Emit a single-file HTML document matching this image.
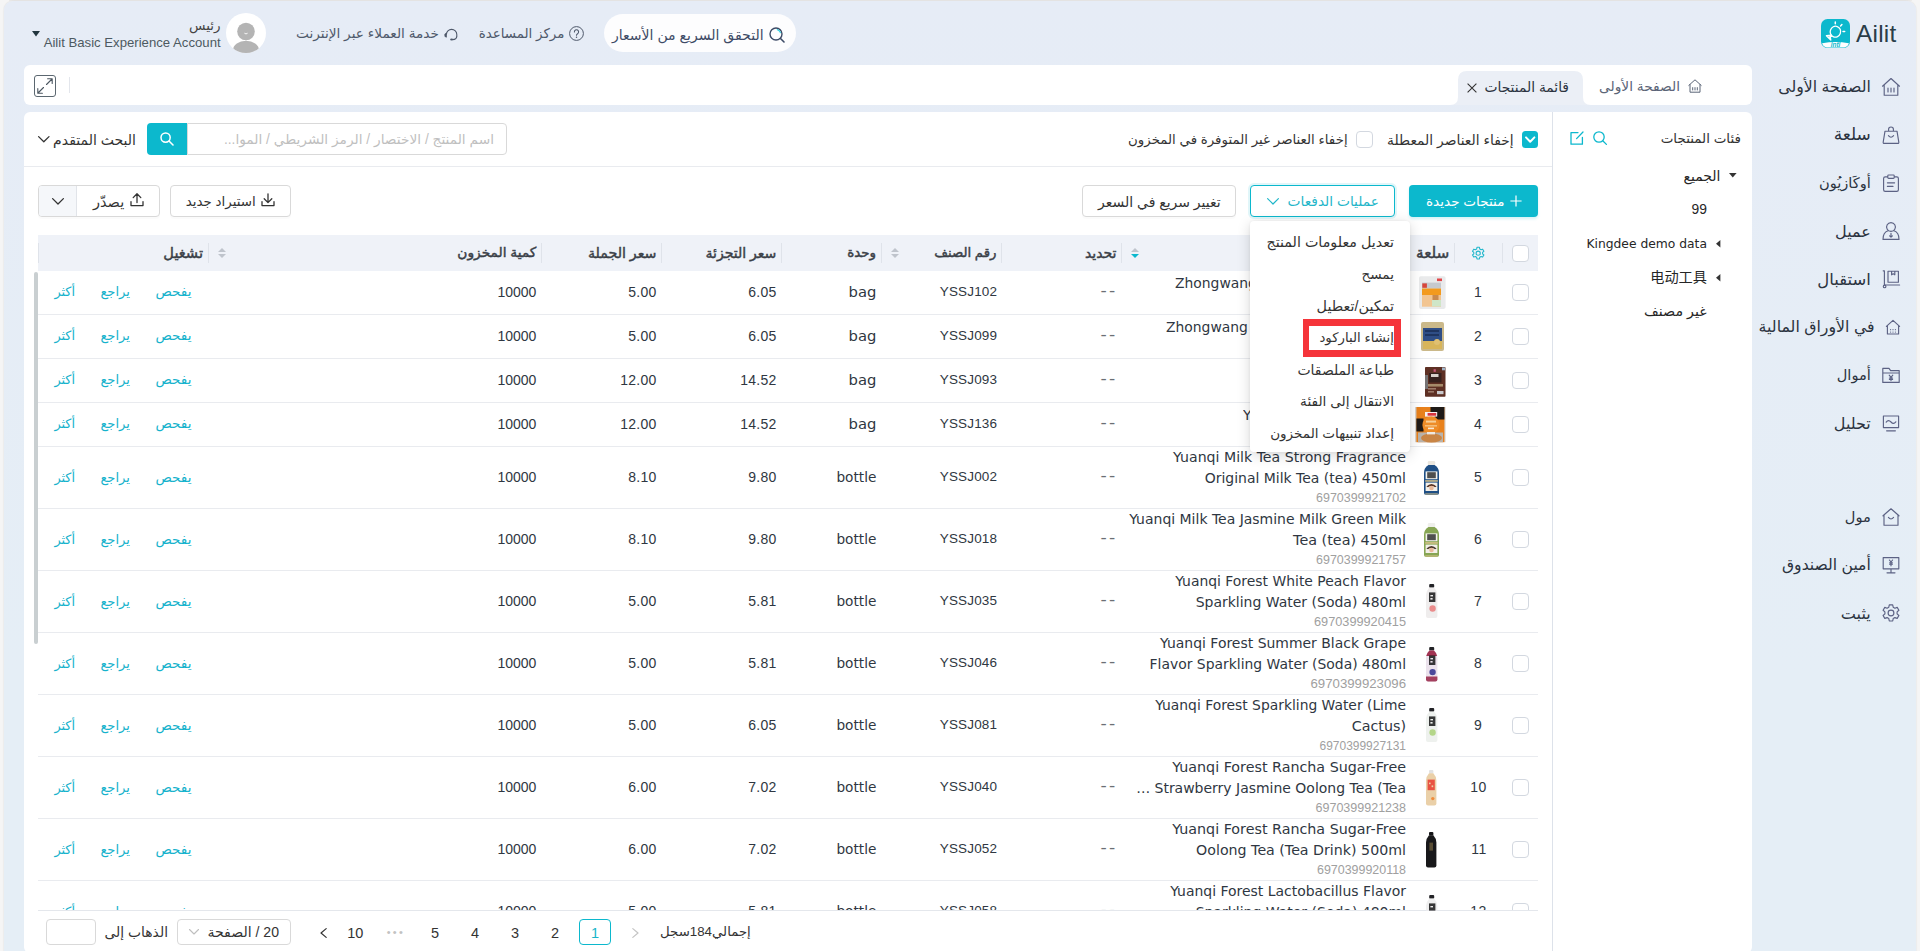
<!DOCTYPE html>
<html lang="ar" dir="rtl">
<head>
<meta charset="utf-8">
<title>قائمة المنتجات</title>
<style>
*{box-sizing:border-box;margin:0;padding:0}
html,body{width:1920px;height:951px;overflow:hidden;background:#f5f5f5}
body{position:relative;font-family:"Liberation Sans","DejaVu Sans","Noto Sans CJK SC",sans-serif;color:#333;font-size:14px}
.abs{position:absolute}
.t{position:absolute;white-space:nowrap;line-height:20px;height:20px}
svg{position:absolute;overflow:visible}
#app{position:absolute;left:4px;top:1px;width:1912.3px;height:960px;background:linear-gradient(#e6ecf6,#e5eef6 70%);border-radius:9px 9px 0 0;box-shadow:0 0 1.5px rgba(0,0,0,.16)}
.ico{stroke:#5c6284;fill:none;stroke-width:1.15;stroke-linejoin:round;stroke-linecap:round}
.tl{stroke:#0cb8cd;fill:none;stroke-width:1.3;stroke-linejoin:round;stroke-linecap:round}
.dk{stroke:#333;fill:none;stroke-width:1.3;stroke-linejoin:round;stroke-linecap:round}
.cb{position:absolute;width:17px;height:17px;border:1px solid #d3d8e0;border-radius:4px;background:#fff}
.hsep{position:absolute;width:1px;height:20px;top:243px;background:#dfe3ea}
.rb{position:absolute;left:38px;width:1500px;height:1px;background:#e9ebef}
.btn{position:absolute;top:185px;height:32px;border:1px solid #d9d9d9;border-radius:4px;background:#fff;box-shadow:0 2px 0 rgba(0,0,0,.015)}
.nm{position:absolute;right:514px;width:300px;text-align:right;font-family:'DejaVu Sans','Liberation Sans',sans-serif;font-size:13.9px;line-height:21px;color:#2f3742;white-space:nowrap}
.bc{position:absolute;right:514px;font-family:'Liberation Sans',sans-serif;font-size:12.6px;line-height:16px;color:#a0a0a0;white-space:nowrap}
</style>
</head>
<body>
<div class="abs" style="left:9px;top:0;width:1903px;height:1px;background:#ecebea"></div>
<div id="app"></div>
<svg style="left:1821px;top:19px;" width="29" height="29" viewBox="0 0 29 29">
<rect x="0" y="0" width="29" height="29" rx="6.5" fill="#0cb8cd"/>
<path d="M1.2 24.2 Q14.5 21.6 27.8 24.2 L27.8 24.6 Q26.6 28.4 23 28.4 L6 28.4 Q2.4 28.4 1.2 24.6Z" fill="#fff"/>
<ellipse cx="14.4" cy="12.7" rx="5.2" ry="5.5" transform="rotate(20 14.4 12.7)" fill="none" stroke="#fff" stroke-width="1.3"/>
<path d="M10.4 16.2 L5.4 16.7 L9.8 21 L9.2 17.6 M7.4 18.2 L10.6 17.4" stroke="#fff" stroke-width="1.3" fill="none" stroke-linecap="round" stroke-linejoin="round"/>
<path d="M14.3 4.7V3.1 M19.6 6.9l1.3-1.4 M22 12.6h1.7" stroke="#fff" stroke-width="1.5" fill="none" stroke-linecap="round"/>
<text x="14.6" y="28.2" font-size="6.4" font-weight="bold" font-style="italic" fill="#0cb8cd" text-anchor="middle" font-family="Liberation Sans,sans-serif" direction="ltr">intl</text>
</svg>
<div class="t" dir="ltr" style="right:23.5px;top:18.5px;font-size:24.30px;color:#2a3d48;font-family:'Liberation Sans','DejaVu Sans',sans-serif;letter-spacing:.25px;line-height:30px;height:30px;">Ailit</div>
<div class="abs" style="left:604px;top:14px;width:192px;height:38px;background:#fdfdfe;border-radius:19px"></div>
<svg style="left:769px;top:27px;" width="16" height="16" viewBox="0 0 16 16"><circle cx="7" cy="7" r="6" fill="none" stroke="#3d4b66" stroke-width="1.4"/><path d="M11.5 11.5L15 15" stroke="#3d4b66" stroke-width="1.6" stroke-linecap="round"/><path d="M8.3 2.6A4.6 4.6 0 0 1 11.4 5.7" stroke="#39d0e0" stroke-width="1.2" fill="none" stroke-linecap="round"/></svg>
<div class="t" style="right:1156.4px;top:24.5px;font-size:14.05px;color:#3d4b66;">التحقق السريع من الأسعار</div>
<svg style="left:569px;top:26px;" width="15" height="15" viewBox="0 0 15 15"><circle cx="7.5" cy="7.5" r="6.9" fill="none" stroke="#4f596b" stroke-width="1"/><path d="M5.4 5.9a2.1 2.1 0 1 1 3.2 1.8c-.7.45-1.1.8-1.1 1.6" fill="none" stroke="#4f596b" stroke-width="1.1" stroke-linecap="round"/><circle cx="7.5" cy="11.2" r=".75" fill="#4f596b"/></svg>
<div class="t" style="right:1355.6px;top:23.5px;font-size:13.41px;color:#4f596b;">مركز المساعدة</div>
<svg style="left:443.5px;top:26.5px;" width="15" height="14" viewBox="0 0 15 14"><path d="M2.4 7.6A5.2 5.2 0 0 1 12.8 7.6V9.2" fill="none" stroke="#4f596b" stroke-width="1.1"/><path d="M2.4 6.2V10.2L.9 9.4V7Z" fill="#4f596b" stroke="#4f596b" stroke-width=".8" stroke-linejoin="round"/><path d="M12.8 9C12.8 11.6 10.6 12.6 8.6 12.6" fill="none" stroke="#4f596b" stroke-width="1.1"/><ellipse cx="7.6" cy="12.6" rx="1.5" ry="1" fill="#4f596b"/></svg>
<div class="t" style="right:1481.0px;top:23.5px;font-size:13.69px;color:#4f596b;">خدمة العملاء عبر الإنترنت</div>
<div class="abs" style="left:226px;top:13px;width:40px;height:40px;background:#fff;border-radius:50%;overflow:hidden"><svg style="left:0;top:0" width="40" height="40" viewBox="0 0 40 40"><circle cx="20" cy="18.5" r="8.8" fill="#b4b4b4"/><ellipse cx="20" cy="37" rx="13" ry="9.3" fill="#b4b4b4"/><path d="M18.4 20.2q1.6 1.5 3.2 0" stroke="#fff" stroke-width=".9" fill="none"/></svg></div>
<div class="t" style="right:1699.4px;top:15.5px;font-size:13.52px;color:#444;">رئيس</div>
<div class="t" dir="ltr" style="right:1699.4px;top:32.5px;font-size:13.17px;color:#4d5a61;font-family:'Liberation Sans','DejaVu Sans',sans-serif;">Ailit Basic Experience Account</div>
<svg style="left:32px;top:30.5px;" width="8" height="6" viewBox="0 0 8 6"><path d="M0 0H8L4 5.6Z" fill="#22363f"/></svg>
<svg style="left:1880.7px;top:77.0px;" width="20" height="20" viewBox="0 0 20 20"><path class="ico" d="M1.5 9.2L10 1.5L18.5 9.2M3.2 7.8V18.2H16.8V7.8M7 11v4M10 11v4M13 11v4"/></svg>
<div class="t" style="right:49.2px;top:74.5px;font-size:15.72px;color:#2b3340;line-height:24px;height:24px;">الصفحة الأولى</div>
<svg style="left:1880.7px;top:125.0px;" width="20" height="20" viewBox="0 0 20 20"><path class="ico" d="M4 6.2H16L17.8 17.2Q18 18.4 16.8 18.4H3.2Q2 18.4 2.2 17.2ZM7.6 6V4.2Q7.6 2 10 2Q12.4 2 12.4 4.2V6M7.4 10.6Q10 13.8 12.6 10.6"/></svg>
<div class="t" style="right:49.2px;top:122.5px;font-size:17.00px;color:#2b3340;line-height:24px;height:24px;">سلعة</div>
<svg style="left:1880.7px;top:173.0px;" width="20" height="20" viewBox="0 0 20 20"><path class="ico" d="M6.8 3.8H4.2Q2.6 3.8 2.6 5.4V16.8Q2.6 18.4 4.2 18.4H15.8Q17.4 18.4 17.4 16.8V5.4Q17.4 3.8 15.8 3.8H13.2M7.6 2H12.4Q13.2 2 13.2 2.8V4.6Q13.2 5.4 12.4 5.4H7.6Q6.8 5.4 6.8 4.6V2.8Q6.8 2 7.6 2ZM6.4 9.8H13.6M6.4 13.4H12"/></svg>
<div class="t" style="right:49.2px;top:170.5px;font-size:14.60px;color:#2b3340;line-height:24px;height:24px;">أوكَازيُون</div>
<svg style="left:1880.7px;top:221.0px;" width="20" height="20" viewBox="0 0 20 20"><path class="ico" d="M10 1.6A4.4 4.4 0 1 1 9.99 1.6ZM2 18.4Q2 11.4 7 9.8M18 18.4Q18 11.4 13 9.8M2 18.4H18M10 12.4V16M8.6 14.8L10 16.2L11.4 14.8"/></svg>
<div class="t" style="right:49.2px;top:218.5px;font-size:16.03px;color:#2b3340;line-height:24px;height:24px;">عميل</div>
<svg style="left:1880.7px;top:269.0px;" width="20" height="20" viewBox="0 0 20 20"><path class="ico" d="M2.2 1.8H3.4V16H18.6M7 2.2H17.4V13.2H7ZM10.6 2.2V5.8L12.2 4.8L13.8 5.8V2.2"/><circle class="ico" cx="3.6" cy="17.4" r="1.3"/></svg>
<div class="t" style="right:49.2px;top:266.5px;font-size:16.43px;color:#2b3340;line-height:24px;height:24px;">استقبال</div>
<svg style="left:1883px;top:317.0px;" width="20" height="20" viewBox="0 0 20 20"><path class="ico" d="M3.4 9.4L10 3.4L16.6 9.4M4.4 8.6V17H15.6V8.6M7.6 12.6v.1M10 12.6v.1M12.4 12.6v.1M7.6 15v.1M10 15v.1M12.4 15v.1"/></svg>
<div class="t" style="right:45.4px;top:314.5px;font-size:15.80px;color:#2b3340;line-height:24px;height:24px;">في الأوراق المالية</div>
<svg style="left:1880.7px;top:365.0px;" width="20" height="20" viewBox="0 0 20 20"><path class="ico" d="M1.8 3.4H8L9.6 5.6H18.2V17.4H1.8ZM1.8 8H18.2M8.2 10.2L10 12.4L11.8 10.2M10 12.4V15.6M8.4 13H11.6M8.4 14.4H11.6"/></svg>
<div class="t" style="right:49.2px;top:362.5px;font-size:14.60px;color:#2b3340;line-height:24px;height:24px;">أموال</div>
<svg style="left:1880.7px;top:413.0px;" width="20" height="20" viewBox="0 0 20 20"><path class="ico" d="M2.4 3H17.6V14.6H2.4ZM5.6 17.8H14.4M5.2 9.2Q7.4 6.2 10 9Q12.6 11.8 14.8 8.8"/></svg>
<div class="t" style="right:49.2px;top:410.5px;font-size:16.03px;color:#2b3340;line-height:24px;height:24px;">تحليل</div>
<svg style="left:1880.7px;top:507.0px;" width="20" height="20" viewBox="0 0 20 20"><path class="ico" d="M2 8.8L10 1.8L18 8.8M3 8V18.2H17V8M7.4 10.4Q10 13.6 12.6 10.4"/></svg>
<div class="t" style="right:49.2px;top:504.5px;font-size:14.60px;color:#2b3340;line-height:24px;height:24px;">مول</div>
<svg style="left:1880.7px;top:555.0px;" width="20" height="20" viewBox="0 0 20 20"><path class="ico" d="M2.2 2.6H17.8V13.8H2.2ZM10 13.8V17.6M6 17.8H14M8.4 5L10 7L11.6 5M10 7V10.8M8.6 7.8H11.4M8.6 9.2H11.4"/></svg>
<div class="t" style="right:49.2px;top:552.5px;font-size:15.61px;color:#2b3340;line-height:24px;height:24px;">أمين الصندوق</div>
<svg style="left:1880.7px;top:603.0px;" width="20" height="20" viewBox="0 0 20 20"><path class="ico" d="M8.3 1.8h3.4l.5 2.4 1.7 1 2.3-.8 1.7 2.9-1.8 1.6v2l1.8 1.6-1.7 2.9-2.3-.8-1.7 1-.5 2.4H8.3l-.5-2.4-1.7-1-2.3.8-1.7-2.9 1.8-1.6v-2L2.1 7.3l1.7-2.9 2.3.8 1.7-1Z"/><circle class="ico" cx="10" cy="10" r="2.9"/></svg>
<div class="t" style="right:49.2px;top:600.5px;font-size:16.10px;color:#2b3340;line-height:24px;height:24px;">يثبت</div>
<div class="abs" style="left:24px;top:65px;width:1728px;height:40px;background:#fff;border-radius:6px"></div>
<svg style="left:1687.5px;top:79px;" width="14" height="14" viewBox="0 0 14 14"><path d="M.8 6.4L7 .8L13.2 6.4M2 5.6V13.2H12V5.6M4.7 8.6v2.4M7 8.6v2.4M9.3 8.6v2.4" fill="none" stroke="#5b6577" stroke-width="1" stroke-linejoin="round" stroke-linecap="round"/></svg>
<div class="t" style="right:240.0px;top:76.5px;font-size:13.77px;color:#5b6577;">الصفحة الأولى</div>
<svg style="left:1450px;top:71px;" width="141" height="34" viewBox="0 0 141 34"><path d="M0 34 Q8 34 8 26 V9 Q8 0 17 0 H124 Q133 0 133 9 V26 Q133 34 141 34 Z" fill="#ebeff6"/></svg>
<div class="t" style="right:351.0px;top:76.5px;font-size:13.85px;color:#2b3340;">قائمة المنتجات</div>
<svg style="left:1466.5px;top:82.5px;" width="10" height="10" viewBox="0 0 10 10"><path d="M.6 .6L9.4 9.4M9.4 .6L.6 9.4" stroke="#333" stroke-width="1.1" fill="none"/></svg>
<div class="abs" style="left:34px;top:74.5px;width:22px;height:22px;border:1px solid #5b6770;border-radius:3px"></div>
<svg style="left:34px;top:74.5px;" width="22" height="22" viewBox="0 0 22 22"><path d="M12.5 9.5L18 4M13.6 3.8H18.2V8.4M9.5 12.5L4 18M3.8 13.6V18.2H8.4" fill="none" stroke="#4b5660" stroke-width="1.1" stroke-linecap="round" stroke-linejoin="round"/></svg>
<div class="abs" style="left:69px;top:77px;width:1px;height:16px;background:#e3e6ec"></div>
<div class="abs" style="left:24px;top:112px;width:1728px;height:840.5px;background:#fff;border-radius:6px"></div>
<div class="abs" style="left:1552px;top:112px;width:1px;height:845px;background:#dde2ea"></div>
<div class="t" style="right:179.0px;top:128.7px;font-size:13.49px;color:#333;">فئات المنتجات</div>
<svg style="left:1593px;top:131px;" width="14" height="14" viewBox="0 0 14 14"><circle class="tl" cx="6" cy="6" r="5.2"/><path class="tl" d="M10 10L13.4 13.4"/></svg>
<svg style="left:1569.5px;top:130.5px;" width="14" height="14" viewBox="0 0 14 14"><path class="tl" d="M8 1.6H1V13.2H12.4V6.4M6.6 7.6L13 1"/></svg>
<svg style="left:1728.5px;top:173px;" width="8" height="5" viewBox="0 0 8 5"><path d="M0 0H7.6L3.8 4.4Z" fill="#333"/></svg>
<div class="t" style="right:199.6px;top:165.5px;font-size:13.94px;color:#262626;">الجميع</div>
<div class="t" dir="ltr" style="right:213.0px;top:198.8px;font-size:13.84px;color:#262626;font-family:'Liberation Sans','DejaVu Sans',sans-serif;">99</div>
<svg style="left:1715.5px;top:239.5px;" width="5" height="8" viewBox="0 0 5 8"><path d="M4.4 0V7.6L0 3.8Z" fill="#333"/></svg>
<div class="t" dir="ltr" style="right:213.0px;top:233.8px;font-size:12.32px;color:#262626;font-family:'DejaVu Sans','Liberation Sans',sans-serif;">Kingdee demo data</div>
<svg style="left:1715.5px;top:273.5px;" width="5" height="8" viewBox="0 0 5 8"><path d="M4.4 0V7.6L0 3.8Z" fill="#333"/></svg>
<div class="t" style="right:213.0px;top:267.0px;font-size:14.20px;color:#262626;">电动工具</div>
<div class="t" style="right:213.3px;top:301.0px;font-size:14.29px;color:#262626;">غير مصنف</div>
<div class="abs" style="left:1521.5px;top:131px;width:16.5px;height:16.5px;background:#0cb8cd;border-radius:3.5px"></div>
<svg style="left:1521.5px;top:131px;" width="16.5" height="16.5" viewBox="0 0 16.5 16.5"><path d="M4 6.4L8.2 10.8L12.4 6.4" fill="none" stroke="#fff" stroke-width="2" stroke-linecap="round" stroke-linejoin="round"/></svg>
<div class="t" style="right:406.4px;top:129.5px;font-size:13.86px;color:#333;">إخفاء العناصر المعطلة</div>
<div class="cb" style="left:1355.5px;top:130.5px"></div>
<div class="t" style="right:572.4px;top:129.5px;font-size:13.36px;color:#333;">إخفاء العناصر غير المتوفرة في المخزون</div>
<div class="abs" style="left:187px;top:123px;width:319.5px;height:32px;border:1px solid #d9d9d9;border-radius:0 4px 4px 0;background:#fff"></div>
<div class="t" style="right:1426.0px;top:129.5px;font-size:13.75px;color:#bfbfbf;">اسم المنتج / الاختصار / الرمز الشريطي / الموا...</div>
<div class="abs" style="left:147px;top:123px;width:40px;height:32px;background:#0cb8cd;border-radius:4px 0 0 4px"></div>
<svg style="left:160px;top:131.5px;" width="14" height="14" viewBox="0 0 14 14"><circle cx="5.6" cy="5.6" r="4.6" fill="none" stroke="#fff" stroke-width="1.5"/><path d="M9 9L13 13" stroke="#fff" stroke-width="1.6" stroke-linecap="round"/></svg>
<div class="t" style="right:1784.0px;top:129.5px;font-size:14.06px;color:#333;">البحث المتقدم</div>
<svg style="left:38px;top:136px;" width="12" height="7" viewBox="0 0 12 7"><path d="M.6 .6L5.8 5.8L11 .6" fill="none" stroke="#333" stroke-width="1.3" stroke-linecap="round" stroke-linejoin="round"/></svg>
<div class="abs" style="left:24px;top:166px;width:1528px;height:1px;background:#e9ebef"></div>
<div class="abs" style="left:1409px;top:185px;width:129px;height:32px;background:#0cb8cd;border-radius:4px;box-shadow:0 2px 3px rgba(12,184,205,.18)"></div>
<svg style="left:1510px;top:195px;" width="12" height="12" viewBox="0 0 12 12"><path d="M6 .4V11.6M.4 6H11.6" stroke="#fff" stroke-width="1.2" fill="none"/></svg>
<div class="t" style="right:415.6px;top:191.5px;font-size:13.57px;color:#fff;">منتجات جديدة</div>
<div class="abs" style="left:1250px;top:185px;width:145px;height:32px;border:1px solid #0cb8cd;border-radius:4px;background:#fff;box-shadow:0 0 0 2px rgba(12,184,205,.12)"></div>
<div class="t" style="right:541.0px;top:191.5px;font-size:13.78px;color:#1fb6c9;">عمليات الدفعات</div>
<svg style="left:1267px;top:197.5px;" width="12" height="7" viewBox="0 0 12 7"><path d="M.6 .6L6 6L11.4 .6" fill="none" stroke="#1fb6c9" stroke-width="1.2" stroke-linecap="round" stroke-linejoin="round"/></svg>
<div class="btn" style="left:1082px;width:154px"></div>
<div class="t" style="right:699.4px;top:191.5px;font-size:13.98px;color:#333;">تغيير سريع في السعر</div>
<div class="btn" style="left:170px;width:121px"></div>
<svg style="left:261px;top:193px;" width="14" height="14" viewBox="0 0 14 14"><path class="dk" d="M7 .8V9.4M3.2 5.8L7 9.6L10.8 5.8M1 8.6V12.6H13V8.6"/></svg>
<div class="t" style="right:1664.2px;top:191.5px;font-size:13.43px;color:#333;">استيراد جديد</div>
<div class="btn" style="left:38px;width:122px"></div>
<div class="abs" style="left:39px;top:186px;width:38px;height:30px;background:#f5f7fa;border-right:1px solid #e1e4e9;border-radius:3px 0 0 3px"></div>
<svg style="left:51.8px;top:197.5px;" width="12" height="7" viewBox="0 0 12 7"><path d="M.6 .6L6 6L11.4 .6" fill="none" stroke="#333" stroke-width="1.3" stroke-linecap="round" stroke-linejoin="round"/></svg>
<svg style="left:129.5px;top:193px;" width="14" height="14" viewBox="0 0 14 14"><path class="dk" d="M7 9.6V1M3.2 4.6L7 .8L10.8 4.6M1 8.6V12.6H13V8.6"/></svg>
<div class="t" style="right:1795.8px;top:191.5px;font-size:14.49px;color:#333;">يصدّر</div>
<div class="abs" style="left:38px;top:235px;width:1500px;height:36px;background:#eff2f8"></div>
<div class="hsep" style="left:38px"></div>
<div class="hsep" style="left:208px"></div>
<div class="hsep" style="left:541px"></div>
<div class="hsep" style="left:661px"></div>
<div class="hsep" style="left:781px"></div>
<div class="hsep" style="left:881px"></div>
<div class="hsep" style="left:1001px"></div>
<div class="hsep" style="left:1121px"></div>
<div class="hsep" style="left:1409px"></div>
<div class="hsep" style="left:1454px"></div>
<div class="hsep" style="left:1502px"></div>
<svg style="left:218px;top:248px;" width="8" height="10" viewBox="0 0 8 10"><path d="M0 4L4 0L8 4Z" fill="#bfc4cc"/><path d="M0 6L4 10L8 6Z" fill="#bfc4cc"/></svg>
<svg style="left:891px;top:248px;" width="8" height="10" viewBox="0 0 8 10"><path d="M0 4L4 0L8 4Z" fill="#bfc4cc"/><path d="M0 6L4 10L8 6Z" fill="#bfc4cc"/></svg>
<svg style="left:1131px;top:248px;" width="8" height="10" viewBox="0 0 8 10"><path d="M0 4L4 0L8 4Z" fill="#bfc4cc"/><path d="M0 6L4 10L8 6Z" fill="#0cb8cd"/></svg>
<div class="t" style="right:1717.0px;top:243.2px;font-size:14.64px;color:#3a3f47;-webkit-text-stroke:.45px #3a3f47;">تشغيل</div>
<div class="t" style="right:1383.6px;top:243.2px;font-size:13.77px;color:#3a3f47;-webkit-text-stroke:.45px #3a3f47;">كمية المخزون</div>
<div class="t" style="right:1263.6px;top:243.2px;font-size:14.20px;color:#3a3f47;-webkit-text-stroke:.45px #3a3f47;">سعر الجملة</div>
<div class="t" style="right:1143.6px;top:243.2px;font-size:14.07px;color:#3a3f47;-webkit-text-stroke:.45px #3a3f47;">سعر التجزئة</div>
<div class="t" style="right:1044.0px;top:243.2px;font-size:13.40px;color:#3a3f47;-webkit-text-stroke:.45px #3a3f47;">وحدة</div>
<div class="t" style="right:923.6px;top:243.2px;font-size:13.26px;color:#3a3f47;-webkit-text-stroke:.45px #3a3f47;">رقم الصنف</div>
<div class="t" style="right:803.6px;top:243.2px;font-size:13.99px;color:#3a3f47;-webkit-text-stroke:.45px #3a3f47;">تحديد</div>
<div class="t" style="right:516.0px;top:242.5px;font-size:13.00px;color:#3a3f47;-webkit-text-stroke:.45px #3a3f47;">اسم المنتج</div>
<div class="t" style="right:470.6px;top:243.2px;font-size:15.27px;color:#3a3f47;-webkit-text-stroke:.45px #3a3f47;">سلعة</div>
<svg style="left:1471px;top:246px;" width="14.4" height="14.4" viewBox="0 0 20 20"><path d="M8.3 1.8h3.4l.5 2.4 1.7 1 2.3-.8 1.7 2.9-1.8 1.6v2l1.8 1.6-1.7 2.9-2.3-.8-1.7 1-.5 2.4H8.3l-.5-2.4-1.7-1-2.3.8-1.7-2.9 1.8-1.6v-2L2.1 7.3l1.7-2.9 2.3.8 1.7-1Z" fill="none" stroke="#22b8cc" stroke-width="1.5" stroke-linejoin="round"/><circle cx="10" cy="10" r="2.9" fill="none" stroke="#22b8cc" stroke-width="1.5"/></svg>
<div class="cb" style="left:1511.5px;top:244.5px"></div>
<div class="abs" style="left:30px;top:271px;width:1512px;height:639.5px;overflow:hidden">
<div class="abs" style="left:-30px;top:-271px;width:1920px;height:951px">
<div class="cb" style="left:1511.5px;top:284.0px"></div>
<div class="t" dir="ltr" style="right:438.0px;top:281.8px;font-size:14.00px;color:#2f3742;font-family:'Liberation Sans','DejaVu Sans',sans-serif;letter-spacing:.3px;">1</div>
<div class="nm" dir="ltr" style="right:auto;left:1175px;width:231px;overflow:hidden;text-align:left;top:272.8px;font-size:13.90px">Zhongwang Hand-Pulled Noodle 1kg</div>
<div class="bc" dir="ltr" style="top:294.5px;line-height:18px">6970399925311</div>
<div class="t" dir="ltr" style="right:804.0px;top:281.0px;font-size:16.00px;color:#6b6f75;font-family:'Liberation Sans','DejaVu Sans',sans-serif;letter-spacing:2px;margin-right:-2px;transform:scaleX(1.17);transform-origin:right center;">--</div>
<div class="t" dir="ltr" style="right:923.0px;top:281.8px;font-size:13.50px;color:#2f3742;font-family:'Liberation Sans','DejaVu Sans',sans-serif;letter-spacing:.15px;margin-right:-.15px;">YSSJ102</div>
<div class="t" dir="ltr" style="right:1043.6px;top:281.8px;font-size:14.77px;color:#2f3742;font-family:'DejaVu Sans','Liberation Sans',sans-serif;">bag</div>
<div class="t" dir="ltr" style="right:1143.6px;top:281.8px;font-size:14.00px;color:#2f3742;font-family:'Liberation Sans','DejaVu Sans',sans-serif;letter-spacing:.3px;margin-right:-.3px;">6.05</div>
<div class="t" dir="ltr" style="right:1263.6px;top:281.8px;font-size:14.00px;color:#2f3742;font-family:'Liberation Sans','DejaVu Sans',sans-serif;letter-spacing:.3px;margin-right:-.3px;">5.00</div>
<div class="t" dir="ltr" style="right:1383.6px;top:281.8px;font-size:14.00px;color:#2f3742;font-family:'Liberation Sans','DejaVu Sans',sans-serif;">10000</div>
<div class="t" style="right:1728.6px;top:282.3px;font-size:13.56px;color:#15b2cc;">يفحص</div>
<div class="t" style="right:1790.0px;top:282.3px;font-size:13.11px;color:#15b2cc;">يراجع</div>
<div class="t" style="right:1845.0px;top:282.3px;font-size:12.81px;color:#15b2cc;">أكثر</div>
<div class="rb" style="top:314px"></div>
<div class="cb" style="left:1511.5px;top:328.0px"></div>
<div class="t" dir="ltr" style="right:438.0px;top:325.8px;font-size:14.00px;color:#2f3742;font-family:'Liberation Sans','DejaVu Sans',sans-serif;letter-spacing:.3px;">2</div>
<div class="nm" dir="ltr" style="right:auto;left:1166px;width:240px;overflow:hidden;text-align:left;top:316.8px;font-size:13.90px">Zhongwang Blue Pack Beef Noodle 1kg</div>
<div class="bc" dir="ltr" style="top:338.5px;line-height:18px">6970399925328</div>
<div class="t" dir="ltr" style="right:804.0px;top:325.0px;font-size:16.00px;color:#6b6f75;font-family:'Liberation Sans','DejaVu Sans',sans-serif;letter-spacing:2px;margin-right:-2px;transform:scaleX(1.17);transform-origin:right center;">--</div>
<div class="t" dir="ltr" style="right:923.0px;top:325.8px;font-size:13.50px;color:#2f3742;font-family:'Liberation Sans','DejaVu Sans',sans-serif;letter-spacing:.15px;margin-right:-.15px;">YSSJ099</div>
<div class="t" dir="ltr" style="right:1043.6px;top:325.8px;font-size:14.77px;color:#2f3742;font-family:'DejaVu Sans','Liberation Sans',sans-serif;">bag</div>
<div class="t" dir="ltr" style="right:1143.6px;top:325.8px;font-size:14.00px;color:#2f3742;font-family:'Liberation Sans','DejaVu Sans',sans-serif;letter-spacing:.3px;margin-right:-.3px;">6.05</div>
<div class="t" dir="ltr" style="right:1263.6px;top:325.8px;font-size:14.00px;color:#2f3742;font-family:'Liberation Sans','DejaVu Sans',sans-serif;letter-spacing:.3px;margin-right:-.3px;">5.00</div>
<div class="t" dir="ltr" style="right:1383.6px;top:325.8px;font-size:14.00px;color:#2f3742;font-family:'Liberation Sans','DejaVu Sans',sans-serif;">10000</div>
<div class="t" style="right:1728.6px;top:326.3px;font-size:13.56px;color:#15b2cc;">يفحص</div>
<div class="t" style="right:1790.0px;top:326.3px;font-size:13.11px;color:#15b2cc;">يراجع</div>
<div class="t" style="right:1845.0px;top:326.3px;font-size:12.81px;color:#15b2cc;">أكثر</div>
<div class="rb" style="top:358px"></div>
<div class="cb" style="left:1511.5px;top:372.0px"></div>
<div class="t" dir="ltr" style="right:438.0px;top:369.8px;font-size:14.00px;color:#2f3742;font-family:'Liberation Sans','DejaVu Sans',sans-serif;letter-spacing:.3px;">3</div>
<div class="nm" dir="ltr" style="right:auto;left:1256px;width:150px;overflow:hidden;text-align:left;top:360.8px;font-size:13.90px">Haochi Spicy Beef 60g</div>
<div class="bc" dir="ltr" style="top:382.5px;line-height:18px">6970399925335</div>
<div class="t" dir="ltr" style="right:804.0px;top:369.0px;font-size:16.00px;color:#6b6f75;font-family:'Liberation Sans','DejaVu Sans',sans-serif;letter-spacing:2px;margin-right:-2px;transform:scaleX(1.17);transform-origin:right center;">--</div>
<div class="t" dir="ltr" style="right:923.0px;top:369.8px;font-size:13.50px;color:#2f3742;font-family:'Liberation Sans','DejaVu Sans',sans-serif;letter-spacing:.15px;margin-right:-.15px;">YSSJ093</div>
<div class="t" dir="ltr" style="right:1043.6px;top:369.8px;font-size:14.77px;color:#2f3742;font-family:'DejaVu Sans','Liberation Sans',sans-serif;">bag</div>
<div class="t" dir="ltr" style="right:1143.6px;top:369.8px;font-size:14.00px;color:#2f3742;font-family:'Liberation Sans','DejaVu Sans',sans-serif;letter-spacing:.3px;margin-right:-.3px;">14.52</div>
<div class="t" dir="ltr" style="right:1263.6px;top:369.8px;font-size:14.00px;color:#2f3742;font-family:'Liberation Sans','DejaVu Sans',sans-serif;letter-spacing:.3px;margin-right:-.3px;">12.00</div>
<div class="t" dir="ltr" style="right:1383.6px;top:369.8px;font-size:14.00px;color:#2f3742;font-family:'Liberation Sans','DejaVu Sans',sans-serif;">10000</div>
<div class="t" style="right:1728.6px;top:370.3px;font-size:13.56px;color:#15b2cc;">يفحص</div>
<div class="t" style="right:1790.0px;top:370.3px;font-size:13.11px;color:#15b2cc;">يراجع</div>
<div class="t" style="right:1845.0px;top:370.3px;font-size:12.81px;color:#15b2cc;">أكثر</div>
<div class="rb" style="top:402px"></div>
<div class="cb" style="left:1511.5px;top:416.0px"></div>
<div class="t" dir="ltr" style="right:438.0px;top:413.8px;font-size:14.00px;color:#2f3742;font-family:'Liberation Sans','DejaVu Sans',sans-serif;letter-spacing:.3px;">4</div>
<div class="nm" dir="ltr" style="right:auto;left:1243px;width:163px;overflow:hidden;text-align:left;top:404.8px;font-size:13.90px">Yili Orange Pumpkin 2kg</div>
<div class="bc" dir="ltr" style="top:426.5px;line-height:18px">6970399925342</div>
<div class="t" dir="ltr" style="right:804.0px;top:413.0px;font-size:16.00px;color:#6b6f75;font-family:'Liberation Sans','DejaVu Sans',sans-serif;letter-spacing:2px;margin-right:-2px;transform:scaleX(1.17);transform-origin:right center;">--</div>
<div class="t" dir="ltr" style="right:923.0px;top:413.8px;font-size:13.50px;color:#2f3742;font-family:'Liberation Sans','DejaVu Sans',sans-serif;letter-spacing:.15px;margin-right:-.15px;">YSSJ136</div>
<div class="t" dir="ltr" style="right:1043.6px;top:413.8px;font-size:14.77px;color:#2f3742;font-family:'DejaVu Sans','Liberation Sans',sans-serif;">bag</div>
<div class="t" dir="ltr" style="right:1143.6px;top:413.8px;font-size:14.00px;color:#2f3742;font-family:'Liberation Sans','DejaVu Sans',sans-serif;letter-spacing:.3px;margin-right:-.3px;">14.52</div>
<div class="t" dir="ltr" style="right:1263.6px;top:413.8px;font-size:14.00px;color:#2f3742;font-family:'Liberation Sans','DejaVu Sans',sans-serif;letter-spacing:.3px;margin-right:-.3px;">12.00</div>
<div class="t" dir="ltr" style="right:1383.6px;top:413.8px;font-size:14.00px;color:#2f3742;font-family:'Liberation Sans','DejaVu Sans',sans-serif;">10000</div>
<div class="t" style="right:1728.6px;top:414.3px;font-size:13.56px;color:#15b2cc;">يفحص</div>
<div class="t" style="right:1790.0px;top:414.3px;font-size:13.11px;color:#15b2cc;">يراجع</div>
<div class="t" style="right:1845.0px;top:414.3px;font-size:12.81px;color:#15b2cc;">أكثر</div>
<div class="rb" style="top:446px"></div>
<div class="cb" style="left:1511.5px;top:469.0px"></div>
<div class="t" dir="ltr" style="right:438.0px;top:467.0px;font-size:14.00px;color:#2f3742;font-family:'Liberation Sans','DejaVu Sans',sans-serif;letter-spacing:.3px;">5</div>
<div class="nm" dir="ltr" style="top:446.8px;font-size:14.11px">Yuanqi Milk Tea Strong Fragrance</div>
<div class="nm" dir="ltr" style="top:467.6px;font-size:13.98px">Original Milk Tea (tea) 450ml</div>
<div class="bc" dir="ltr" style="top:489.0px;line-height:18px;font-size:12.45px">6970399921702</div>
<div class="t" dir="ltr" style="right:804.0px;top:466.2px;font-size:16.00px;color:#6b6f75;font-family:'Liberation Sans','DejaVu Sans',sans-serif;letter-spacing:2px;margin-right:-2px;transform:scaleX(1.17);transform-origin:right center;">--</div>
<div class="t" dir="ltr" style="right:923.0px;top:467.0px;font-size:13.50px;color:#2f3742;font-family:'Liberation Sans','DejaVu Sans',sans-serif;letter-spacing:.15px;margin-right:-.15px;">YSSJ002</div>
<div class="t" dir="ltr" style="right:1043.6px;top:467.0px;font-size:13.68px;color:#2f3742;font-family:'DejaVu Sans','Liberation Sans',sans-serif;">bottle</div>
<div class="t" dir="ltr" style="right:1143.6px;top:467.0px;font-size:14.00px;color:#2f3742;font-family:'Liberation Sans','DejaVu Sans',sans-serif;letter-spacing:.3px;margin-right:-.3px;">9.80</div>
<div class="t" dir="ltr" style="right:1263.6px;top:467.0px;font-size:14.00px;color:#2f3742;font-family:'Liberation Sans','DejaVu Sans',sans-serif;letter-spacing:.3px;margin-right:-.3px;">8.10</div>
<div class="t" dir="ltr" style="right:1383.6px;top:467.0px;font-size:14.00px;color:#2f3742;font-family:'Liberation Sans','DejaVu Sans',sans-serif;">10000</div>
<div class="t" style="right:1728.6px;top:467.5px;font-size:13.56px;color:#15b2cc;">يفحص</div>
<div class="t" style="right:1790.0px;top:467.5px;font-size:13.11px;color:#15b2cc;">يراجع</div>
<div class="t" style="right:1845.0px;top:467.5px;font-size:12.81px;color:#15b2cc;">أكثر</div>
<div class="rb" style="top:508px"></div>
<div class="cb" style="left:1511.5px;top:531.0px"></div>
<div class="t" dir="ltr" style="right:438.0px;top:529.0px;font-size:14.00px;color:#2f3742;font-family:'Liberation Sans','DejaVu Sans',sans-serif;letter-spacing:.3px;">6</div>
<div class="nm" dir="ltr" style="top:508.8px;font-size:13.98px">Yuanqi Milk Tea Jasmine Milk Green Milk</div>
<div class="nm" dir="ltr" style="top:529.6px;font-size:14.37px">Tea (tea) 450ml</div>
<div class="bc" dir="ltr" style="top:551.0px;line-height:18px;font-size:12.45px">6970399921757</div>
<div class="t" dir="ltr" style="right:804.0px;top:528.2px;font-size:16.00px;color:#6b6f75;font-family:'Liberation Sans','DejaVu Sans',sans-serif;letter-spacing:2px;margin-right:-2px;transform:scaleX(1.17);transform-origin:right center;">--</div>
<div class="t" dir="ltr" style="right:923.0px;top:529.0px;font-size:13.50px;color:#2f3742;font-family:'Liberation Sans','DejaVu Sans',sans-serif;letter-spacing:.15px;margin-right:-.15px;">YSSJ018</div>
<div class="t" dir="ltr" style="right:1043.6px;top:529.0px;font-size:13.68px;color:#2f3742;font-family:'DejaVu Sans','Liberation Sans',sans-serif;">bottle</div>
<div class="t" dir="ltr" style="right:1143.6px;top:529.0px;font-size:14.00px;color:#2f3742;font-family:'Liberation Sans','DejaVu Sans',sans-serif;letter-spacing:.3px;margin-right:-.3px;">9.80</div>
<div class="t" dir="ltr" style="right:1263.6px;top:529.0px;font-size:14.00px;color:#2f3742;font-family:'Liberation Sans','DejaVu Sans',sans-serif;letter-spacing:.3px;margin-right:-.3px;">8.10</div>
<div class="t" dir="ltr" style="right:1383.6px;top:529.0px;font-size:14.00px;color:#2f3742;font-family:'Liberation Sans','DejaVu Sans',sans-serif;">10000</div>
<div class="t" style="right:1728.6px;top:529.5px;font-size:13.56px;color:#15b2cc;">يفحص</div>
<div class="t" style="right:1790.0px;top:529.5px;font-size:13.11px;color:#15b2cc;">يراجع</div>
<div class="t" style="right:1845.0px;top:529.5px;font-size:12.81px;color:#15b2cc;">أكثر</div>
<div class="rb" style="top:570px"></div>
<div class="cb" style="left:1511.5px;top:593.0px"></div>
<div class="t" dir="ltr" style="right:438.0px;top:591.0px;font-size:14.00px;color:#2f3742;font-family:'Liberation Sans','DejaVu Sans',sans-serif;letter-spacing:.3px;">7</div>
<div class="nm" dir="ltr" style="top:570.8px;font-size:13.92px">Yuanqi Forest White Peach Flavor</div>
<div class="nm" dir="ltr" style="top:591.6px;font-size:13.99px">Sparkling Water (Soda) 480ml</div>
<div class="bc" dir="ltr" style="top:613.0px;line-height:18px;font-size:12.72px">6970399920415</div>
<div class="t" dir="ltr" style="right:804.0px;top:590.2px;font-size:16.00px;color:#6b6f75;font-family:'Liberation Sans','DejaVu Sans',sans-serif;letter-spacing:2px;margin-right:-2px;transform:scaleX(1.17);transform-origin:right center;">--</div>
<div class="t" dir="ltr" style="right:923.0px;top:591.0px;font-size:13.50px;color:#2f3742;font-family:'Liberation Sans','DejaVu Sans',sans-serif;letter-spacing:.15px;margin-right:-.15px;">YSSJ035</div>
<div class="t" dir="ltr" style="right:1043.6px;top:591.0px;font-size:13.68px;color:#2f3742;font-family:'DejaVu Sans','Liberation Sans',sans-serif;">bottle</div>
<div class="t" dir="ltr" style="right:1143.6px;top:591.0px;font-size:14.00px;color:#2f3742;font-family:'Liberation Sans','DejaVu Sans',sans-serif;letter-spacing:.3px;margin-right:-.3px;">5.81</div>
<div class="t" dir="ltr" style="right:1263.6px;top:591.0px;font-size:14.00px;color:#2f3742;font-family:'Liberation Sans','DejaVu Sans',sans-serif;letter-spacing:.3px;margin-right:-.3px;">5.00</div>
<div class="t" dir="ltr" style="right:1383.6px;top:591.0px;font-size:14.00px;color:#2f3742;font-family:'Liberation Sans','DejaVu Sans',sans-serif;">10000</div>
<div class="t" style="right:1728.6px;top:591.5px;font-size:13.56px;color:#15b2cc;">يفحص</div>
<div class="t" style="right:1790.0px;top:591.5px;font-size:13.11px;color:#15b2cc;">يراجع</div>
<div class="t" style="right:1845.0px;top:591.5px;font-size:12.81px;color:#15b2cc;">أكثر</div>
<div class="rb" style="top:632px"></div>
<div class="cb" style="left:1511.5px;top:655.0px"></div>
<div class="t" dir="ltr" style="right:438.0px;top:653.0px;font-size:14.00px;color:#2f3742;font-family:'Liberation Sans','DejaVu Sans',sans-serif;letter-spacing:.3px;">8</div>
<div class="nm" dir="ltr" style="top:632.8px;font-size:13.96px">Yuanqi Forest Summer Black Grape</div>
<div class="nm" dir="ltr" style="top:653.6px;font-size:13.91px">Flavor Sparkling Water (Soda) 480ml</div>
<div class="bc" dir="ltr" style="top:675.0px;line-height:18px;font-size:13.21px">6970399923096</div>
<div class="t" dir="ltr" style="right:804.0px;top:652.2px;font-size:16.00px;color:#6b6f75;font-family:'Liberation Sans','DejaVu Sans',sans-serif;letter-spacing:2px;margin-right:-2px;transform:scaleX(1.17);transform-origin:right center;">--</div>
<div class="t" dir="ltr" style="right:923.0px;top:653.0px;font-size:13.50px;color:#2f3742;font-family:'Liberation Sans','DejaVu Sans',sans-serif;letter-spacing:.15px;margin-right:-.15px;">YSSJ046</div>
<div class="t" dir="ltr" style="right:1043.6px;top:653.0px;font-size:13.68px;color:#2f3742;font-family:'DejaVu Sans','Liberation Sans',sans-serif;">bottle</div>
<div class="t" dir="ltr" style="right:1143.6px;top:653.0px;font-size:14.00px;color:#2f3742;font-family:'Liberation Sans','DejaVu Sans',sans-serif;letter-spacing:.3px;margin-right:-.3px;">5.81</div>
<div class="t" dir="ltr" style="right:1263.6px;top:653.0px;font-size:14.00px;color:#2f3742;font-family:'Liberation Sans','DejaVu Sans',sans-serif;letter-spacing:.3px;margin-right:-.3px;">5.00</div>
<div class="t" dir="ltr" style="right:1383.6px;top:653.0px;font-size:14.00px;color:#2f3742;font-family:'Liberation Sans','DejaVu Sans',sans-serif;">10000</div>
<div class="t" style="right:1728.6px;top:653.5px;font-size:13.56px;color:#15b2cc;">يفحص</div>
<div class="t" style="right:1790.0px;top:653.5px;font-size:13.11px;color:#15b2cc;">يراجع</div>
<div class="t" style="right:1845.0px;top:653.5px;font-size:12.81px;color:#15b2cc;">أكثر</div>
<div class="rb" style="top:694px"></div>
<div class="cb" style="left:1511.5px;top:717.0px"></div>
<div class="t" dir="ltr" style="right:438.0px;top:715.0px;font-size:14.00px;color:#2f3742;font-family:'Liberation Sans','DejaVu Sans',sans-serif;letter-spacing:.3px;">9</div>
<div class="nm" dir="ltr" style="top:694.8px;font-size:13.87px">Yuanqi Forest Sparkling Water (Lime</div>
<div class="nm" dir="ltr" style="top:715.6px;font-size:14.29px">Cactus)</div>
<div class="bc" dir="ltr" style="top:737.0px;line-height:18px;font-size:11.96px">6970399927131</div>
<div class="t" dir="ltr" style="right:804.0px;top:714.2px;font-size:16.00px;color:#6b6f75;font-family:'Liberation Sans','DejaVu Sans',sans-serif;letter-spacing:2px;margin-right:-2px;transform:scaleX(1.17);transform-origin:right center;">--</div>
<div class="t" dir="ltr" style="right:923.0px;top:715.0px;font-size:13.50px;color:#2f3742;font-family:'Liberation Sans','DejaVu Sans',sans-serif;letter-spacing:.15px;margin-right:-.15px;">YSSJ081</div>
<div class="t" dir="ltr" style="right:1043.6px;top:715.0px;font-size:13.68px;color:#2f3742;font-family:'DejaVu Sans','Liberation Sans',sans-serif;">bottle</div>
<div class="t" dir="ltr" style="right:1143.6px;top:715.0px;font-size:14.00px;color:#2f3742;font-family:'Liberation Sans','DejaVu Sans',sans-serif;letter-spacing:.3px;margin-right:-.3px;">6.05</div>
<div class="t" dir="ltr" style="right:1263.6px;top:715.0px;font-size:14.00px;color:#2f3742;font-family:'Liberation Sans','DejaVu Sans',sans-serif;letter-spacing:.3px;margin-right:-.3px;">5.00</div>
<div class="t" dir="ltr" style="right:1383.6px;top:715.0px;font-size:14.00px;color:#2f3742;font-family:'Liberation Sans','DejaVu Sans',sans-serif;">10000</div>
<div class="t" style="right:1728.6px;top:715.5px;font-size:13.56px;color:#15b2cc;">يفحص</div>
<div class="t" style="right:1790.0px;top:715.5px;font-size:13.11px;color:#15b2cc;">يراجع</div>
<div class="t" style="right:1845.0px;top:715.5px;font-size:12.81px;color:#15b2cc;">أكثر</div>
<div class="rb" style="top:756px"></div>
<div class="cb" style="left:1511.5px;top:779.0px"></div>
<div class="t" dir="ltr" style="right:433.5px;top:777.0px;font-size:14.00px;color:#2f3742;font-family:'Liberation Sans','DejaVu Sans',sans-serif;letter-spacing:.3px;">10</div>
<div class="nm" dir="ltr" style="top:756.8px;font-size:14.29px">Yuanqi Forest Rancha Sugar-Free</div>
<div class="nm" dir="ltr" style="top:777.6px;font-size:13.98px">… Strawberry Jasmine Oolong Tea (Tea</div>
<div class="bc" dir="ltr" style="top:799.0px;line-height:18px;font-size:12.52px">6970399921238</div>
<div class="t" dir="ltr" style="right:804.0px;top:776.2px;font-size:16.00px;color:#6b6f75;font-family:'Liberation Sans','DejaVu Sans',sans-serif;letter-spacing:2px;margin-right:-2px;transform:scaleX(1.17);transform-origin:right center;">--</div>
<div class="t" dir="ltr" style="right:923.0px;top:777.0px;font-size:13.50px;color:#2f3742;font-family:'Liberation Sans','DejaVu Sans',sans-serif;letter-spacing:.15px;margin-right:-.15px;">YSSJ040</div>
<div class="t" dir="ltr" style="right:1043.6px;top:777.0px;font-size:13.68px;color:#2f3742;font-family:'DejaVu Sans','Liberation Sans',sans-serif;">bottle</div>
<div class="t" dir="ltr" style="right:1143.6px;top:777.0px;font-size:14.00px;color:#2f3742;font-family:'Liberation Sans','DejaVu Sans',sans-serif;letter-spacing:.3px;margin-right:-.3px;">7.02</div>
<div class="t" dir="ltr" style="right:1263.6px;top:777.0px;font-size:14.00px;color:#2f3742;font-family:'Liberation Sans','DejaVu Sans',sans-serif;letter-spacing:.3px;margin-right:-.3px;">6.00</div>
<div class="t" dir="ltr" style="right:1383.6px;top:777.0px;font-size:14.00px;color:#2f3742;font-family:'Liberation Sans','DejaVu Sans',sans-serif;">10000</div>
<div class="t" style="right:1728.6px;top:777.5px;font-size:13.56px;color:#15b2cc;">يفحص</div>
<div class="t" style="right:1790.0px;top:777.5px;font-size:13.11px;color:#15b2cc;">يراجع</div>
<div class="t" style="right:1845.0px;top:777.5px;font-size:12.81px;color:#15b2cc;">أكثر</div>
<div class="rb" style="top:818px"></div>
<div class="cb" style="left:1511.5px;top:841.0px"></div>
<div class="t" dir="ltr" style="right:433.5px;top:839.0px;font-size:14.00px;color:#2f3742;font-family:'Liberation Sans','DejaVu Sans',sans-serif;letter-spacing:.3px;">11</div>
<div class="nm" dir="ltr" style="top:818.8px;font-size:14.29px">Yuanqi Forest Rancha Sugar-Free</div>
<div class="nm" dir="ltr" style="top:839.6px;font-size:14.21px">Oolong Tea (Tea Drink) 500ml</div>
<div class="bc" dir="ltr" style="top:861.0px;line-height:18px;font-size:12.44px">6970399920118</div>
<div class="t" dir="ltr" style="right:804.0px;top:838.2px;font-size:16.00px;color:#6b6f75;font-family:'Liberation Sans','DejaVu Sans',sans-serif;letter-spacing:2px;margin-right:-2px;transform:scaleX(1.17);transform-origin:right center;">--</div>
<div class="t" dir="ltr" style="right:923.0px;top:839.0px;font-size:13.50px;color:#2f3742;font-family:'Liberation Sans','DejaVu Sans',sans-serif;letter-spacing:.15px;margin-right:-.15px;">YSSJ052</div>
<div class="t" dir="ltr" style="right:1043.6px;top:839.0px;font-size:13.68px;color:#2f3742;font-family:'DejaVu Sans','Liberation Sans',sans-serif;">bottle</div>
<div class="t" dir="ltr" style="right:1143.6px;top:839.0px;font-size:14.00px;color:#2f3742;font-family:'Liberation Sans','DejaVu Sans',sans-serif;letter-spacing:.3px;margin-right:-.3px;">7.02</div>
<div class="t" dir="ltr" style="right:1263.6px;top:839.0px;font-size:14.00px;color:#2f3742;font-family:'Liberation Sans','DejaVu Sans',sans-serif;letter-spacing:.3px;margin-right:-.3px;">6.00</div>
<div class="t" dir="ltr" style="right:1383.6px;top:839.0px;font-size:14.00px;color:#2f3742;font-family:'Liberation Sans','DejaVu Sans',sans-serif;">10000</div>
<div class="t" style="right:1728.6px;top:839.5px;font-size:13.56px;color:#15b2cc;">يفحص</div>
<div class="t" style="right:1790.0px;top:839.5px;font-size:13.11px;color:#15b2cc;">يراجع</div>
<div class="t" style="right:1845.0px;top:839.5px;font-size:12.81px;color:#15b2cc;">أكثر</div>
<div class="rb" style="top:880px"></div>
<div class="cb" style="left:1511.5px;top:903.0px"></div>
<div class="t" dir="ltr" style="right:433.5px;top:901.0px;font-size:14.00px;color:#2f3742;font-family:'Liberation Sans','DejaVu Sans',sans-serif;letter-spacing:.3px;">12</div>
<div class="nm" dir="ltr" style="top:880.8px;font-size:13.96px">Yuanqi Forest Lactobacillus Flavor</div>
<div class="nm" dir="ltr" style="top:901.6px;font-size:13.99px">Sparkling Water (Soda) 480ml</div>
<div class="bc" dir="ltr" style="top:923.0px;line-height:18px;font-size:12.72px">6970399920422</div>
<div class="t" dir="ltr" style="right:804.0px;top:900.2px;font-size:16.00px;color:#6b6f75;font-family:'Liberation Sans','DejaVu Sans',sans-serif;letter-spacing:2px;margin-right:-2px;transform:scaleX(1.17);transform-origin:right center;">--</div>
<div class="t" dir="ltr" style="right:923.0px;top:901.0px;font-size:13.50px;color:#2f3742;font-family:'Liberation Sans','DejaVu Sans',sans-serif;letter-spacing:.15px;margin-right:-.15px;">YSSJ058</div>
<div class="t" dir="ltr" style="right:1043.6px;top:901.0px;font-size:13.68px;color:#2f3742;font-family:'DejaVu Sans','Liberation Sans',sans-serif;">bottle</div>
<div class="t" dir="ltr" style="right:1143.6px;top:901.0px;font-size:14.00px;color:#2f3742;font-family:'Liberation Sans','DejaVu Sans',sans-serif;letter-spacing:.3px;margin-right:-.3px;">5.81</div>
<div class="t" dir="ltr" style="right:1263.6px;top:901.0px;font-size:14.00px;color:#2f3742;font-family:'Liberation Sans','DejaVu Sans',sans-serif;letter-spacing:.3px;margin-right:-.3px;">5.00</div>
<div class="t" dir="ltr" style="right:1383.6px;top:901.0px;font-size:14.00px;color:#2f3742;font-family:'Liberation Sans','DejaVu Sans',sans-serif;">10000</div>
<div class="t" style="right:1728.6px;top:901.5px;font-size:13.56px;color:#15b2cc;">يفحص</div>
<div class="t" style="right:1790.0px;top:901.5px;font-size:13.11px;color:#15b2cc;">يراجع</div>
<div class="t" style="right:1845.0px;top:901.5px;font-size:12.81px;color:#15b2cc;">أكثر</div>
<div class="rb" style="top:942px"></div>
</div></div>
<div class="abs" style="left:38px;top:910px;width:1500px;height:1px;background:#e4e7ec"></div>
<div class="abs" style="left:34px;top:271.5px;width:3.6px;height:372px;background:#c9cfd1;border-radius:2px"></div>
<svg style="left:1419px;top:276px;" width="27" height="33" viewBox="0 0 27 33"><rect x="0" y=".3" width="26.6" height="32.6" rx="1.8" fill="#e9eaeb"/><rect x="3" y="6.6" width="19" height="6" fill="#c6c9ce"/><rect x="3.3" y="7.4" width="4.6" height="4.4" fill="#d8453a"/><rect x="3" y="12.5" width="19" height="6.5" fill="#f39a1e"/><rect x="3" y="19" width="19" height="11.7" fill="#f2c592"/><rect x="13" y="24" width="9" height="6.5" fill="#cfe6c8"/><rect x="13.5" y="19" width="6" height="5" fill="#c98a4f"/><rect x="18" y="2.5" width="5" height="2.6" fill="#e2474a"/></svg>
<svg style="left:1421px;top:322px;" width="24" height="29" viewBox="0 0 24 29"><rect x="0" y="0" width="23" height="29" rx="2" fill="#cbb98a"/><rect x="2" y="6" width="19" height="13" fill="#2f4e86"/><rect x="2" y="19" width="19" height="8" fill="#d8b55a"/><rect x="4" y="8" width="14" height="2" fill="#1f3560"/><rect x="4" y="12" width="14" height="2" fill="#1f3560"/><circle cx="16" cy="20" r="3" fill="#e0c071"/></svg>
<svg style="left:1424.7px;top:367.2px;" width="20.5" height="29.7" viewBox="0 0 20.5 29.7"><rect x="0" y="0" width="20.5" height="29.7" rx=".8" fill="#5e3024"/><rect x="0" y="8" width="3" height="14" fill="#7f8a8f" opacity=".75"/><rect x="4" y="6" width="12.5" height="9.5" fill="#36211e"/><rect x="6" y="7" width="7.5" height="3" fill="#d9d0ca"/><rect x="8.6" y="2.2" width="2.2" height="2.6" fill="#c7567a"/><rect x="3" y="17" width="15" height="2.6" fill="#a58b6a"/><rect x="3" y="21" width="8" height="1.6" fill="#9c7a69"/><rect x="3" y="24" width="6" height="1.6" fill="#9c7a69"/><rect x="12" y="24" width="6.5" height="3.2" fill="#c9c9cc"/><rect x="17" y=".5" width="3" height="2.8" fill="#9fb3c6"/></svg>
<svg style="left:1415px;top:407.2px;" width="30.6" height="35.2" viewBox="0 0 30.6 35.2"><rect x="0" y="0" width="30.6" height="35.2" fill="#d9d4cf"/><rect x="1.4" y="0" width="28" height="35.2" fill="#e8811c"/><path d="M15.5 0H29.4V12.5H22.5L15.5 5Z" fill="#1f1a17"/><path d="M1.4 11.5H8.5V24.5H1.4Z" fill="#1f1a17"/><rect x="10" y="5" width="12.2" height="4.6" fill="#f6f0f0"/><rect x="12.6" y="6" width="8.6" height="2.7" fill="#d9363e"/><circle cx="16" cy="18" r="8.6" fill="#ee8c27"/><rect x="11" y="13.6" width="10" height="2" fill="#f7cf96"/><rect x="10" y="18" width="12" height="1.6" fill="#f4bd78"/><rect x="13" y="20.6" width="6" height="1.6" fill="#fbe9d2"/><path d="M3 25.5H28V35.2H3Z" fill="#b9b3ac"/><ellipse cx="16.5" cy="31" rx="10.5" ry="4.6" fill="#c98545"/><rect x="12" y="25" width="8" height="2.4" fill="#efe9e2"/></svg>
<svg style="left:1424.4px;top:461px;" width="15" height="34" viewBox="0 0 15 34"><rect x="3.8" y="0" width="7.4" height="4.2" rx="1.2" fill="#ebe7df"/><path d="M4.4 4H10.6Q15 6.6 15 11.5V31.5Q15 34 12.5 34H2.5Q0 34 0 31.5V11.5Q0 6.6 4.4 4Z" fill="#1f4f85"/><rect x="1.6" y="10.4" width="11.8" height="7.8" fill="#f4f3ee"/><rect x="3.2" y="11.2" width="8.6" height="6" fill="#2b2b2b" opacity=".82"/><rect x="1.2" y="19.2" width="12.6" height="1.5" fill="#d8c28a"/><rect x="1.6" y="21.6" width="11.8" height="8.4" fill="#f3efe8"/><path d="M2.4 25.4Q7.5 20.4 12.6 25.4L11 26.2Q7.5 23.8 4 26.2Z" fill="#5a3424"/><circle cx="7.5" cy="27" r="2.3" fill="#e9b99a"/><rect x="1" y="32.2" width="13" height="1.6" rx=".8" fill="#d8c28a" opacity=".7"/></svg>
<svg style="left:1424.4px;top:522.8px;" width="15" height="34" viewBox="0 0 15 34"><rect x="3.8" y="0" width="7.4" height="4.2" rx="1.2" fill="#efefec"/><path d="M4.4 4H10.6Q15 6.6 15 11.5V31.5Q15 34 12.5 34H2.5Q0 34 0 31.5V11.5Q0 6.6 4.4 4Z" fill="#86a553"/><rect x="1.6" y="10.4" width="11.8" height="7.8" fill="#f4f3ee"/><rect x="3.2" y="11.2" width="8.6" height="6" fill="#2b2b2b" opacity=".82"/><rect x="1.2" y="19.2" width="12.6" height="1.5" fill="#d8c28a"/><rect x="1.6" y="21.6" width="11.8" height="8.4" fill="#f3efe8"/><path d="M2.4 25.4Q7.5 20.4 12.6 25.4L11 26.2Q7.5 23.8 4 26.2Z" fill="#4a3a2e"/><circle cx="7.5" cy="27" r="2.3" fill="#e9b99a"/><rect x="1" y="32.2" width="13" height="1.6" rx=".8" fill="#d8c28a" opacity=".7"/></svg>
<svg style="left:1425.6px;top:584.4px;" width="11.4" height="34" viewBox="0 0 11.4 34"><rect x="3.2" y="0" width="5" height="3.8" rx="1" fill="#222226"/><path id="b" d="M3.4 3.6H8Q11.4 7 11.4 11V32Q11.4 34 9.4 34H2Q0 34 0 32V11Q0 7 3.4 3.6Z" fill="#efeded"/><rect x="3" y="8.4" width="6.4" height="9.6" fill="#1c1c1e" opacity=".88"/><rect x="4.4" y="11" width="2.6" height="1.4" fill="#efeded"/><rect x="4.4" y="14" width="2.2" height="1.6" fill="#efeded"/><circle cx="6.6" cy="24.5" r="3.2" fill="#ea8c8c"/></svg>
<svg style="left:1425.6px;top:646.8px;" width="11.4" height="34.6" viewBox="0 0 11.4 34.6"><rect x="3.2" y="0" width="5" height="3.8" rx="1" fill="#222226"/><path id="b" d="M3.4 3.6H8Q11.4 7 11.4 11V32.6Q11.4 34.6 9.4 34.6H2Q0 34.6 0 32.6V11Q0 7 3.4 3.6Z" fill="#ebe2ec"/><path d="M3.4 3.6H8Q10.6 6.2 11.2 9H.2Q.8 6.2 3.4 3.6Z" fill="#a23352"/><path d="M0 29.6H11.4V32.6Q11.4 34.6 9.4 34.6H2Q0 34.6 0 32.6Z" fill="#a4405f"/><rect x="3" y="8.4" width="6.4" height="9.6" fill="#1c1c1e" opacity=".88"/><rect x="4.4" y="11" width="2.6" height="1.4" fill="#ebe2ec"/><rect x="4.4" y="14" width="2.2" height="1.6" fill="#ebe2ec"/><circle cx="6.6" cy="25.1" r="3.2" fill="#4b4a9c"/></svg>
<svg style="left:1425.9px;top:708.4px;" width="11.4" height="34" viewBox="0 0 11.4 34"><rect x="3.2" y="0" width="5" height="3.8" rx="1" fill="#222226"/><path id="b" d="M3.4 3.6H8Q11.4 7 11.4 11V32Q11.4 34 9.4 34H2Q0 34 0 32V11Q0 7 3.4 3.6Z" fill="#eef1ee"/><rect x="3" y="8.4" width="6.4" height="9.6" fill="#1c1c1e" opacity=".88"/><rect x="4.4" y="11" width="2.6" height="1.4" fill="#eef1ee"/><rect x="4.4" y="14" width="2.2" height="1.6" fill="#eef1ee"/><circle cx="6.6" cy="24.5" r="3.2" fill="#b4d689"/></svg>
<svg style="left:1426px;top:770px;" width="10.4" height="35.4" viewBox="0 0 10.4 35.4"><rect x="3" y="0" width="4.4" height="3.4" rx="1" fill="#e2e2e2"/><path d="M3 3.2H7.4Q10.4 6.6 10.4 10.4V33.4Q10.4 35.4 8.4 35.4H2Q0 35.4 0 33.4V10.4Q0 6.6 3 3.2Z" fill="#ead0a8"/><rect x="1.6" y="9.6" width="7.2" height="10.6" fill="#e8473a" opacity=".92"/><rect x="3" y="12.6" width="1.6" height="1.6" fill="#ead0a8"/><rect x="5.6" y="15.4" width="1.6" height="1.8" fill="#ead0a8"/><circle cx="6.8" cy="28.6" r="1.7" fill="#f08c3c"/></svg>
<svg style="left:1426px;top:832px;" width="10.4" height="35.4" viewBox="0 0 10.4 35.4"><rect x="3" y="0" width="4.4" height="3.4" rx="1" fill="#151517"/><path d="M3 3.2H7.4Q10.4 6.6 10.4 10.4V33.4Q10.4 35.4 8.4 35.4H2Q0 35.4 0 33.4V10.4Q0 6.6 3 3.2Z" fill="#18181a"/><rect x="3.4" y="10.6" width="3.6" height="8" fill="#8f7a4a" opacity=".55"/></svg>
<svg style="left:1425.9px;top:894.5px;" width="11.4" height="15.6" viewBox="0 0 11.4 15.6"><rect x="3.2" y="0" width="5" height="3.8" rx="1" fill="#222226"/><path d="M3.4 3.6H8Q11.4 7 11.4 11V15.6H0V11Q0 7 3.4 3.6Z" fill="#efefef"/><rect x="3" y="8.4" width="6.4" height="7.2" fill="#1c1c1e" opacity=".88"/><rect x="4.4" y="11" width="2.6" height="1.4" fill="#efefef"/></svg>
<div class="abs" style="left:1250px;top:221px;width:160px;height:231px;background:#fff;border-radius:4px;box-shadow:0 3px 14px rgba(0,0,0,.16),0 0 3px rgba(0,0,0,.06)"></div>
<div class="t" style="right:526.0px;top:232.0px;font-size:14.28px;color:#333;">تعديل معلومات المنتج</div>
<div class="t" style="right:526.0px;top:264.5px;font-size:13.62px;color:#333;">يمسح</div>
<div class="t" style="right:526.0px;top:296.0px;font-size:14.36px;color:#333;">تمكين/تعطيل</div>
<div class="t" style="right:526.0px;top:328.0px;font-size:13.30px;color:#333;">إنشاء الباركود</div>
<div class="t" style="right:526.0px;top:360.0px;font-size:13.95px;color:#333;">طباعة الملصقات</div>
<div class="t" style="right:526.0px;top:392.0px;font-size:13.70px;color:#333;">الانتقال إلى الفئة</div>
<div class="t" style="right:526.0px;top:424.0px;font-size:13.56px;color:#333;">إعداد تنبيهات المخزون</div>
<div class="abs" style="left:1303px;top:319px;width:98px;height:38px;border:7px solid #f5343a;border-left-width:6.5px"></div>
<div class="t" style="right:1169.2px;top:922.0px;font-size:13.30px;color:#333;">إجمالي184سجل</div>
<svg style="left:632px;top:927.5px;" width="7" height="10" viewBox="0 0 7 10"><path d="M.8 .6L6 5L.8 9.4" fill="none" stroke="#c4c4c4" stroke-width="1.2" stroke-linecap="round" stroke-linejoin="round"/></svg>
<div class="abs" style="left:579px;top:919px;width:32px;height:26px;border:1px solid #0cb8cd;border-radius:4px;background:#fff"></div>
<div class="t" dir="ltr" style="right:1321.0px;top:922.8px;font-size:14.50px;color:#1ab5c9;font-family:'Liberation Sans','DejaVu Sans',sans-serif;">1</div>
<div class="t" dir="ltr" style="right:1361.0px;top:922.8px;font-size:14.50px;color:#333;font-family:'Liberation Sans','DejaVu Sans',sans-serif;">2</div>
<div class="t" dir="ltr" style="right:1401.0px;top:922.8px;font-size:14.50px;color:#333;font-family:'Liberation Sans','DejaVu Sans',sans-serif;">3</div>
<div class="t" dir="ltr" style="right:1441.0px;top:922.8px;font-size:14.50px;color:#333;font-family:'Liberation Sans','DejaVu Sans',sans-serif;">4</div>
<div class="t" dir="ltr" style="right:1481.0px;top:922.8px;font-size:14.50px;color:#333;font-family:'Liberation Sans','DejaVu Sans',sans-serif;">5</div>
<div class="t" dir="ltr" style="right:1517.2px;top:922.3px;font-size:11.00px;color:#c2c2c2;font-family:'Liberation Sans','DejaVu Sans',sans-serif;letter-spacing:2.3px;margin-right:-2.3px;">•••</div>
<div class="t" dir="ltr" style="right:1556.7px;top:922.8px;font-size:14.50px;color:#333;font-family:'Liberation Sans','DejaVu Sans',sans-serif;">10</div>
<svg style="left:319.5px;top:927.5px;" width="7" height="10" viewBox="0 0 7 10"><path d="M6.2 .6L1 5L6.2 9.4" fill="none" stroke="#333" stroke-width="1.2" stroke-linecap="round" stroke-linejoin="round"/></svg>
<div class="abs" style="left:177px;top:919px;width:113.5px;height:26px;border:1px solid #d9d9d9;border-radius:4px;background:#fff"></div>
<div class="t" style="right:1641.0px;top:922.0px;font-size:14.07px;color:#333;">20 / الصفحة</div>
<svg style="left:189px;top:929px;" width="10" height="6" viewBox="0 0 10 6"><path d="M.5 .5L5 5L9.5 .5" fill="none" stroke="#bfbfbf" stroke-width="1.1" stroke-linecap="round" stroke-linejoin="round"/></svg>
<div class="t" style="right:1752.0px;top:922.0px;font-size:13.88px;color:#333;">الذهاب إلى</div>
<div class="abs" style="left:46px;top:919px;width:49.5px;height:26px;border:1px solid #d9d9d9;border-radius:4px;background:#fff"></div>
</body>
</html>
